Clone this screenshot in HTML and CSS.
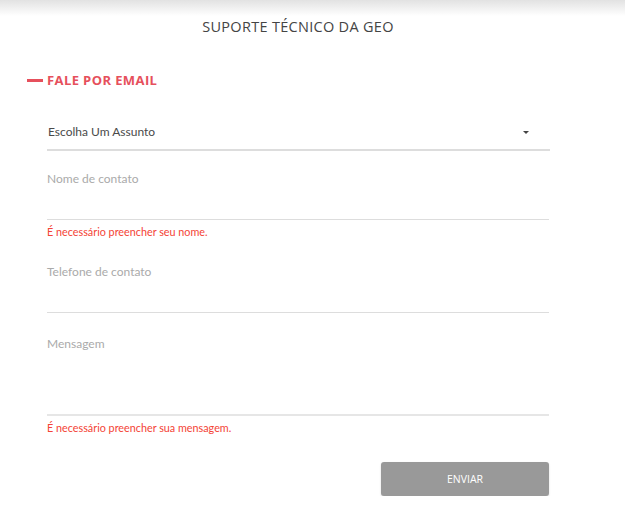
FILE: index.html
```html
<!DOCTYPE html>
<html lang="pt">
<head>
	<meta charset="UTF-8">
	<meta name="viewport" content="width=device-width">
	<title>Suporte técnico</title>
	<link rel="stylesheet" href="styles.css">
</head>
<body>
<div class="topbar"></div>
<main class="support">
	<h1 class="support-title">SUPORTE TÉCNICO DA GEO</h1>

	<h2 class="section-title"><span class="dash"></span>FALE POR EMAIL</h2>

	<form class="mail-form">
		<div class="field field-select">
			<span class="select-value">Escolha Um Assunto</span>
			<span class="caret"></span>
		</div>

		<div class="field field-text">
			<span class="placeholder">Nome de contato</span>
		</div>
		<p class="error">É necessário preencher seu nome.</p>

		<div class="field field-text field-phone">
			<span class="placeholder">Telefone de contato</span>
		</div>

		<div class="field field-text field-message">
			<span class="placeholder">Mensagem</span>
		</div>
		<p class="error">É necessário preencher sua mensagem.</p>

		<div class="actions">
			<button type="button" class="send">ENVIAR</button>
		</div>
	</form>
</main>
</body>
</html>
```

FILE: styles.css
```css
html, body {
	margin: 0;
	background: #fff;
}

body {
	font-family: Lato, "Open Sans", sans-serif;
	color: #444;
}

.topbar {
	height: 16px;
	background: linear-gradient(to bottom, #e2e2e2, rgba(255,255,255,0));
	margin-bottom: -16px;
}

.support {
	padding: 18px 0 0 0;
}

.support-title {
	margin: 0 29px 0 0;
	text-align: center;
	font-family: "Open Sans", sans-serif;
	font-weight: 400;
	font-size: 14.5px;
	letter-spacing: 0.3px;
	color: #444;
	line-height: 18px;
}

.section-title {
	display: flex;
	align-items: center;
	margin: 36px 0 0 27px;
	font-family: "Open Sans", sans-serif;
	font-weight: 700;
	font-size: 13px;
	letter-spacing: 0.4px;
	line-height: 16px;
	color: #e6505c;
}

.dash {
	display: inline-block;
	width: 16px;
	height: 3px;
	background: #e6505c;
	margin-right: 4px;
}

.mail-form {
	width: 502px;
	margin: 27px 0 0 47px;
}

.field {
	display: flex;
	border-bottom: 1px solid #ddd;
}

.field-select {
	justify-content: space-between;
	align-items: flex-start;
	height: 36px;
	border-bottom: 2px solid #ddd;
	padding: 9px 0 0 1px;
	width: 503px;
	box-sizing: border-box;
}

.select-value {
	font-size: 12px;
	color: #4a4a4a;
	line-height: 16px;
}

.caret {
	width: 0;
	height: 0;
	border-left: 3px solid transparent;
	border-right: 3px solid transparent;
	border-top: 3px solid #444;
	margin: 7px 21px 0 0;
}

.field-text {
	margin-top: 20px;
	height: 48px;
	align-items: flex-start;
}

.placeholder {
	font-size: 12px;
	line-height: 15px;
	color: #aaa;
}

.field-phone {
	margin-top: 26px;
	height: 48px;
}

.field-message {
	margin-top: 23px;
	height: 78px;
	border-bottom: 2px solid #e6e6e6;
}

.error {
	margin: 5px 0 0;
	font-size: 10.8px;
	line-height: 13px;
	color: #f44336;
}

.actions {
	display: flex;
	justify-content: flex-end;
	margin-top: 28px;
}

.send {
	width: 168px;
	height: 34px;
	border: none;
	border-radius: 3px;
	background: #999;
	color: #fff;
	font-family: "Open Sans", sans-serif;
	font-size: 10.5px;
	box-shadow: 0 1px 2px rgba(0,0,0,0.15);
}
```
